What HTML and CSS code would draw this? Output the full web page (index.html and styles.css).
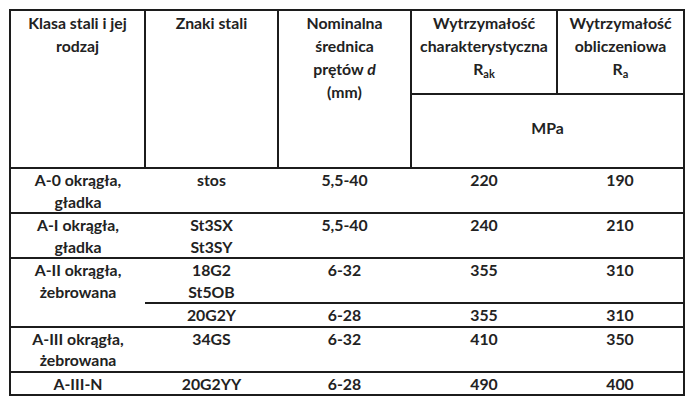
FILE: index.html
```html
<!DOCTYPE html>
<html lang="pl">
<head>
<meta charset="utf-8">
<link rel="stylesheet" href="styles.css">
</head>
<body>
<table class="steel">
  <colgroup>
    <col class="c1"><col class="c2"><col class="c3"><col class="c4"><col class="c5">
  </colgroup>
  <thead>
    <tr class="h1">
      <th rowspan="2">Klasa stali i jej<br>rodzaj</th>
      <th rowspan="2">Znaki stali</th>
      <th rowspan="2">Nominalna<br>średnica<br>prętów <i>d</i><br>(mm)</th>
      <th>Wytrzymałość<br>charakterystyczna<br>R<sub>ak</sub></th>
      <th>Wytrzymałość<br>obliczeniowa<br>R<sub>a</sub></th>
    </tr>
    <tr class="h2">
      <th colspan="2" class="unit">MPa</th>
    </tr>
  </thead>
  <tbody>
    <tr class="row two">
      <td class="name">A-0 okrągła,<br>gładka</td>
      <td class="mark">stos</td>
      <td class="dia">5,5-40</td>
      <td class="rak">220</td>
      <td class="ra">190</td>
    </tr>
    <tr class="row two">
      <td class="name">A-I okrągła,<br>gładka</td>
      <td class="mark">St3SX<br>St3SY</td>
      <td class="dia">5,5-40</td>
      <td class="rak">240</td>
      <td class="ra">210</td>
    </tr>
    <tr class="row two">
      <td class="name" rowspan="2">A-II okrągła,<br>żebrowana</td>
      <td class="mark">18G2<br>St5OB</td>
      <td class="dia">6-32</td>
      <td class="rak">355</td>
      <td class="ra">310</td>
    </tr>
    <tr class="row one">
      <td class="mark">20G2Y</td>
      <td class="dia">6-28</td>
      <td class="rak">355</td>
      <td class="ra">310</td>
    </tr>
    <tr class="row two">
      <td class="name">A-III okrągła,<br>żebrowana</td>
      <td class="mark">34GS</td>
      <td class="dia">6-32</td>
      <td class="rak">410</td>
      <td class="ra">350</td>
    </tr>
    <tr class="row one">
      <td class="name">A-III-N</td>
      <td class="mark">20G2YY</td>
      <td class="dia">6-28</td>
      <td class="rak">490</td>
      <td class="ra">400</td>
    </tr>
  </tbody>
</table>
</body>
</html>
```

FILE: styles.css
```css
html, body {
  margin: 0;
  padding: 0;
  background: #ffffff;
}

body {
  padding: 9px 0 0 9px;
}

.steel {
  border-collapse: collapse;
  table-layout: fixed;
  width: 674px;
  font-family: Lato, "Open Sans", sans-serif;
  font-weight: 700;
  font-size: 15.8px;
  color: #222222;
  border: 2px solid #1c1c1c;
}

.c1 { width: 135px; }
.c2 { width: 133px; }
.c3 { width: 133px; }
.c4 { width: 146px; }
.c5 { width: 127px; }

.steel th,
.steel td {
  padding: 0;
  text-align: center;
  vertical-align: top;
  line-height: 23px;
  white-space: nowrap;
}

.steel th {
  font-weight: 700;
  border: 2px solid #1c1c1c;
}

.h1 th {
  height: 82px;
  padding-top: 0;
}

.h2 th.unit {
  height: 64px;
  vertical-align: middle;
  padding-bottom: 8px;
}

.steel sub {
  font-size: 11px;
  line-height: 0;
  vertical-align: -3px;
}

.steel td {
  border-top: 2px solid #1c1c1c;
  border-bottom: 2px solid #1c1c1c;
  line-height: 21.5px;
  overflow: hidden;
}

.row.two td {
  height: 43px;
}

.row.one td {
  height: 20px;
}

.name { padding-right: 22px; }
.mark { padding-right: 8px; }
.dia { padding-left: 8px; }
.rak { padding-right: 8px; }
.ra { padding-right: 6px; }
```
